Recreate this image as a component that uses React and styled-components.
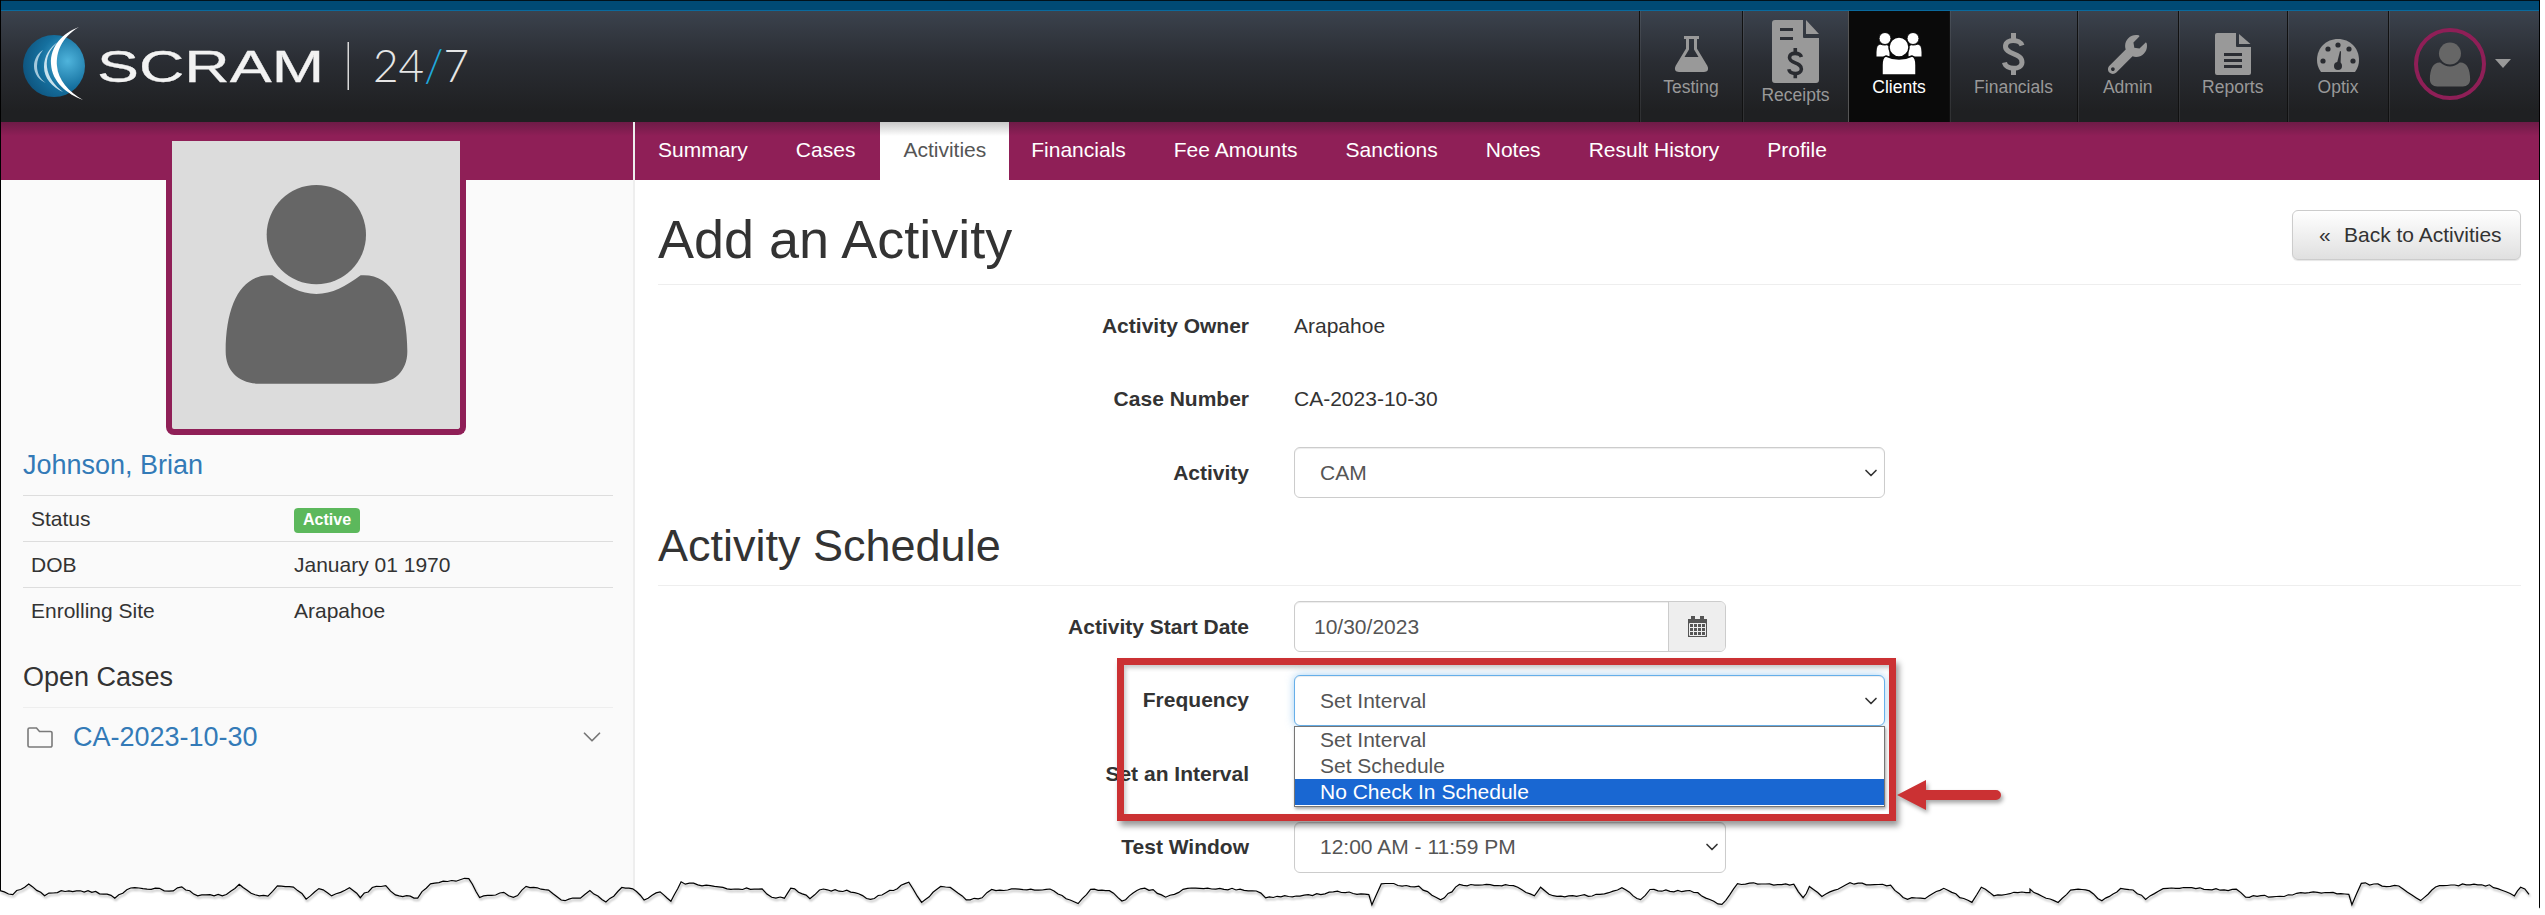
import React from "react";
import styled, { createGlobalStyle } from "styled-components";
import { ChevronDown } from "lucide-react";
import { FaWrench } from "react-icons/fa";

const GlobalStyle = createGlobalStyle`
  html, body {
    margin: 0;
    background: #fff;
    overflow: hidden;
  }
  * {
    box-sizing: border-box;
  }
  body {
    font-family: "Liberation Sans", Arial, sans-serif;
    font-size: 21px;
    color: #333;
  }
`;

const Page = styled.div`
  position: relative;
  width: 2545px;
  height: 915px;
  overflow: hidden;
`;

const Frame = styled.div`
  width: 2540px;
  height: 915px;
  border-left: 1px solid #000;
  border-right: 1px solid #000;
  display: flex;
  flex-direction: column;
`;

const TopStrip = styled.div`
  height: 11px;
  flex: none;
  background: #004a75;
  border-top: 1px solid #02121c;
  border-bottom: 1px solid #0a6a9e;
`;

const Header = styled.header`
  height: 111px;
  flex: none;
  display: flex;
  justify-content: space-between;
  background: linear-gradient(#3b424d, #2a2d33 45%, #1f2022 90%);
`;

const Logo = styled.svg`
  width: 480px;
  height: 111px;
  flex: none;
`;

const NavIcons = styled.nav`
  display: flex;
`;

const NavItem = styled.div`
  width: ${(p) => p.$w}px;
  display: flex;
  flex-direction: column;
  align-items: center;
  border-left: 1px solid ${(p) => (p.$active ? "#555" : "#111")};
  box-shadow: ${(p) => (p.$active ? "1px 0 0 #555" : "inset 1px 0 0 rgba(255, 255, 255, 0.08)")};
  background: ${(p) => (p.$active ? "#0a0a0a" : "transparent")};
  color: ${(p) => (p.$active ? "#fff" : "#999")};
  position: relative;
`;

const IconSlot = styled.div`
  height: ${(p) => p.$h}px;
  display: flex;
  align-items: flex-end;
  justify-content: center;
  padding-bottom: ${(p) => p.$lift}px;
`;

const NavLabel = styled.span`
  font-size: 17.5px;
  line-height: 20px;
`;

const UserMenu = styled.div`
  width: 151px;
  display: flex;
  align-items: center;
  padding: 0 0 6px 25px;
  border-left: 1px solid #111;
  box-shadow: inset 1px 0 0 rgba(255, 255, 255, 0.08);
`;

const Caret = styled.span`
  width: 0;
  height: 0;
  margin-left: 9px;
  border-left: 8px solid transparent;
  border-right: 8px solid transparent;
  border-top: 9px solid #999;
`;

const Body = styled.div`
  flex: 1;
  display: flex;
  min-height: 0;
`;

const Sidebar = styled.aside`
  width: 634px;
  flex: none;
  background: #fafafa;
  border-right: 2px solid #eee;
`;

const Band = styled.div`
  height: 58px;
  background: linear-gradient(#6e1b47, #8f1f57 14px);
`;

const SideContent = styled.div`
  padding: 0 20px 0 22px;
`;

const PhotoCard = styled.div`
  position: relative;
  width: 300px;
  height: 294px;
  margin: -39px 0 0 143px;
  padding-top: 42px;
  display: flex;
  justify-content: center;
  align-items: flex-start;
  background: #dcdcdc;
  border: 6px solid #8f1f57;
  border-top: 0;
  border-radius: 0 0 8px 8px;
`;

const ClientName = styled.a`
  display: block;
  margin-top: 15px;
  font-size: 27px;
  line-height: 30px;
  color: #337ab7;
`;

const InfoTable = styled.div`
  margin-top: 15px;
`;

const InfoRow = styled.div`
  height: 46px;
  display: grid;
  grid-template-columns: 263px 1fr;
  align-items: center;
  padding-left: 8px;
  border-top: 1px solid #ddd;
`;

const Badge = styled.span`
  justify-self: start;
  height: 25px;
  margin-top: 3px;
  line-height: 24px;
  padding: 0 9px;
  border-radius: 4px;
  background: #5cb85c;
  color: #fff;
  font-size: 16px;
  font-weight: 700;
`;

const SideTitle = styled.h4`
  margin: 28px 0 0;
  padding-bottom: 14px;
  font-size: 27px;
  line-height: 32px;
  font-weight: 400;
  border-bottom: 1px solid #eee;
`;

const CaseRow = styled.div`
  height: 58px;
  display: flex;
  align-items: center;
  padding: 0 6px 0 4px;
  color: #337ab7;
  font-size: 27px;
`;

const CaseLink = styled.a`
  flex: 1;
  margin-left: 20px;
`;

const Main = styled.main`
  flex: 1;
  min-width: 0;
`;

const Tabs = styled.div`
  height: 58px;
  display: flex;
  gap: 2px;
  background: linear-gradient(#6e1b47, #8f1f57 14px);
`;

const Tab = styled.a`
  padding: 0 23px;
  margin-right: ${(p) => (p.$active ? "-3px" : "0")};
  line-height: 56px;
  color: ${(p) => (p.$active ? "#555" : "#fff")};
  background: ${(p) => (p.$active ? "linear-gradient(#c8c8c8, #fff 14px)" : "transparent")};
`;

const Content = styled.div`
  padding: 0 18px 0 23px;
`;

const PageHeader = styled.div`
  height: 105px;
  padding-top: 29px;
  display: flex;
  justify-content: space-between;
  align-items: flex-start;
  border-bottom: 1px solid #eee;
`;

const Title = styled.h1`
  margin: 0;
  font-size: 54px;
  line-height: 60px;
  font-weight: 400;
`;

const BackButton = styled.button`
  width: 229px;
  height: 50px;
  margin-top: 1px;
  padding: 0 0 0 26px;
  display: flex;
  align-items: center;
  font: inherit;
  color: #333;
  background: linear-gradient(#fff, #e0e0e0);
  border: 1px solid #ccc;
  border-radius: 6px;
  box-shadow: 0 1px 1px rgba(0, 0, 0, 0.1);
`;

const BackMark = styled.span`
  width: 25px;
  text-align: left;
`;

const FormGroup = styled.div`
  display: flex;
  flex-direction: column;
  gap: ${(p) => p.$gap}px;
  padding-top: ${(p) => p.$top}px;
`;

const FormRow = styled.div`
  height: ${(p) => p.$h}px;
  display: grid;
  grid-template-columns: 591px 1fr;
  column-gap: 45px;
  align-items: center;
`;

const Label = styled.label`
  font-weight: 700;
  text-align: right;
`;

const SectionTitle = styled.h2`
  margin: 23px 0 0;
  padding-bottom: 14px;
  font-size: 45px;
  line-height: 50px;
  font-weight: 400;
  border-bottom: 1px solid #eee;
`;

const Field = styled.div`
  position: relative;
  width: ${(p) => p.$w}px;
  height: 51px;
`;

const SelectBox = styled.div`
  height: 100%;
  display: flex;
  align-items: center;
  justify-content: space-between;
  padding: ${(p) => (p.$focus ? "2px" : "0")} 3px 0 25px;
  color: #555;
  border: 1px solid ${(p) => (p.$focus ? "#66afe9" : "#ccc")};
  border-radius: 6px;
  box-shadow: ${(p) =>
    p.$focus
      ? "inset 0 1px 1px rgba(0,0,0,.075), 0 0 8px rgba(102,175,233,.6)"
      : "inset 0 1px 1px rgba(0,0,0,.075)"};
  background: #fff;
`;

const DateGroup = styled.div`
  height: 100%;
  display: flex;
  border: 1px solid #ccc;
  border-radius: 6px;
  overflow: hidden;
  color: #555;
  box-shadow: inset 0 1px 1px rgba(0, 0, 0, 0.075);
`;

const DateInput = styled.div`
  flex: 1;
  padding-left: 19px;
  line-height: 49px;
`;

const DateAddon = styled.div`
  width: 57px;
  display: flex;
  align-items: center;
  justify-content: center;
  background: #eee;
  border-left: 1px solid #ccc;
`;

const Dropdown = styled.div`
  position: absolute;
  z-index: 2;
  top: 51px;
  left: 0;
  width: 100%;
  height: 81px;
  background: #fff;
  border: 1px solid #767676;
  box-shadow: 1px 2px 3px rgba(0, 0, 0, 0.35);
`;

const Option = styled.div`
  height: 26px;
  line-height: 25px;
  padding-left: 25px;
  color: ${(p) => (p.$selected ? "#fff" : "#555")};
  background: ${(p) => (p.$selected ? "#1967d2" : "transparent")};
`;

const RedBox = styled.div`
  position: absolute;
  z-index: 3;
  left: 1117px;
  top: 658px;
  width: 779px;
  height: 163px;
  border: 7px solid #cb3133;
  box-shadow: 3px 5px 6px rgba(0, 0, 0, 0.4), inset 2px 3px 4px rgba(0, 0, 0, 0.22);
`;

const Arrow = styled.svg`
  position: absolute;
  z-index: 3;
  left: 1896px;
  top: 778px;
  filter: drop-shadow(2px 3px 2px rgba(0, 0, 0, 0.35));
`;

const TornEdge = styled.svg`
  position: absolute;
  z-index: 4;
  left: 0;
  top: 870px;
  display: block;
`;

const leftTear = [
  [0, 155], [20, 162], [45, 132], [70, 165], [90, 155], [150, 155], [180, 172], [205, 142], [250, 147],
  [265, 155], [285, 142], [310, 168], [355, 165], [375, 136], [400, 165], [420, 168], [435, 140], [460, 140],
  [480, 175], [500, 143], [520, 170], [548, 142], [565, 170], [590, 136], [605, 140], [620, 168], [655, 172],
  [675, 130], [715, 122], [735, 115], [752, 172], [790, 160], [805, 175], [825, 142], [860, 150], [880, 180],
  [910, 175], [925, 150], [950, 187], [975, 145], [992, 145], [1010, 180], [1035, 155], [1052, 185], [1068, 128],
  [1140, 145], [1195, 148], [1210, 175], [1230, 172], [1240, 142], [1270, 175], [1285, 148], [1340, 155],
  [1365, 180], [1425, 128], [1445, 188], [1475, 140], [1490, 140], [1515, 178], [1540, 172], [1555, 148], [1568, 150],
].map(([x, y]) => [x / 1.568, 840 + y / 3]);

const midTear = [
  [0, 900], [45, 940], [65, 900], [95, 900], [115, 935], [145, 895], [165, 900], [185, 925], [220, 892], [330, 900],
  [345, 920], [400, 918], [460, 905], [510, 915], [515, 945], [530, 880], [590, 890], [625, 930], [655, 885],
  [735, 885], [775, 915], [785, 890], [805, 920], [880, 915], [915, 895], [945, 930], [960, 900], [1030, 905],
  [1075, 945], [1100, 880], [1190, 885], [1205, 925], [1215, 890], [1235, 920], [1280, 880], [1345, 885],
  [1365, 925], [1400, 925], [1430, 895], [1475, 940], [1490, 890], [1510, 915], [1568, 905],
].map(([x, y]) => [1050 + x / 1.6, 590 + y / 3]);

// the right end is not traced, it repeats the middle piece
const rightTear = midTear.map(([x, y]) => [x + 980, y]).filter(([x]) => x < 2560);

const buildTear = () => {
  const points = [...leftTear, ...midTear, ...rightTear];
  let seed = 17;
  const jitter = () => {
    seed = (seed * 16807) % 2147483647;
    return (seed / 2147483647 - 0.5) * 2;
  };
  const out = [];
  for (let i = 0; i < points.length - 1; i++) {
    const [x1, y1] = points[i];
    const [x2, y2] = points[i + 1];
    const steps = Math.max(1, Math.round((x2 - x1) / 4));
    for (let s = 0; s < steps; s++) {
      const t = s / steps;
      out.push([x1 + (x2 - x1) * t, y1 + (y2 - y1) * t + jitter() * 1.1]);
    }
  }
  return out.map(([x, y]) => `${x.toFixed(1)} ${y.toFixed(1)}`).join(" L");
};

const tear = buildTear();

const PersonShape = ({ width, height, color = "#666" }) => (
  <svg width={width} height={height} viewBox="190 160 555 606" style={{ position: "relative" }}>
    <circle cx="467" cy="315" r="149" fill={color} />
    <path
      fill={color}
      d="M335 437C380 470 420 493 467 493C515 493 555 470 600 437C690 430 740 520 740 665C740 725 700 762 640 762L295 762C235 762 195 725 195 665C195 520 245 430 335 437Z"
    />
  </svg>
);

const FlaskIcon = () => (
  <svg width="35" height="36" viewBox="0 0 35 36">
    <path d="M10 1.5H25M13.5 2V13L3 30.5Q1 34.5 5 34.5H30Q34 34.5 32 30.5L21.5 13V2" fill="none" stroke="currentColor" strokeWidth="3" />
    <path d="M9 21H26L33 34H2Z" fill="currentColor" />
  </svg>
);

const DollarStroke = ({ x = 0, y = 0, s = 1, color }) => (
  <g transform={`translate(${x} ${y}) scale(${s})`} fill="none" stroke={color} strokeWidth="5">
    <path d="M20 12.5C18 6 4 5.5 3.5 13C3 22 20.5 19.5 20 29.5C19.5 37.5 4 37 2.5 29.5" />
    <path d="M11.5 0V8M11.5 34V42" />
  </g>
);

const ReceiptIcon = () => (
  <svg width="47" height="63" viewBox="0 0 47 63">
    <path fill="currentColor" d="M3 0H31V17a1 1 0 0 0 1 1H47V60a3 3 0 0 1-3 3H3a3 3 0 0 1-3-3V3a3 3 0 0 1 3-3Z" />
    <path fill="currentColor" d="M34 0L47 14H34Z" />
    <path fill="#2d3036" d="M8 8H21V11H8ZM8 17H21V20H8Z" />
    <DollarStroke x={15} y={28} s={0.72} color="#2a2c31" />
  </svg>
);

const ClientsIcon = () => (
  <svg width="46" height="43" viewBox="0 0 46 43">
    <g fill="currentColor" stroke="#0a0a0a" strokeWidth="1">
      <circle cx="9" cy="6.5" r="6" />
      <circle cx="37" cy="6.5" r="6" />
      <path d="M4 12Q0 13 0 20V25H14V14Q10 12 9 13Q6 13 4 12Z" />
      <path d="M42 12Q46 13 46 20V25H32V14Q36 12 37 13Q40 13 42 12Z" />
      <path d="M10 24Q6 25 6 33V43H40V33Q40 25 36 24Q30 27 23 27Q16 27 10 24Z" strokeWidth="1.5" />
      <circle cx="23" cy="15" r="10" strokeWidth="1.5" />
    </g>
  </svg>
);

const DollarIcon = () => (
  <svg width="24" height="42" viewBox="0 0 24 42">
    <DollarStroke color="currentColor" />
  </svg>
);

const ReportIcon = () => (
  <svg width="36" height="42" viewBox="0 0 36 42">
    <path fill="currentColor" d="M2 0H21V13a1 1 0 0 0 1 1H36V40a2 2 0 0 1-2 2H2a2 2 0 0 1-2-2V2a2 2 0 0 1 2-2Z" />
    <path fill="currentColor" d="M24 1L35.5 11H24Z" />
    <path fill="#2b2d33" d="M9 20H27V23H9ZM9 26H27V29H9ZM9 32H27V35H9Z" />
  </svg>
);

const GaugeIcon = () => (
  <svg width="42" height="33" viewBox="0 0 42 33">
    <path fill="currentColor" d="M4 33C1 29 0 25 0 21C0 9 9 0 21 0C33 0 42 9 42 21C42 25 41 29 38 33Z" />
    <g fill="#2a2c31">
      <circle cx="11" cy="10" r="2.6" />
      <circle cx="21" cy="6" r="2.6" />
      <circle cx="32" cy="10" r="2.6" />
      <circle cx="6" cy="22" r="2.6" />
      <circle cx="36" cy="22" r="2.6" />
      <circle cx="21" cy="27" r="4" />
      <path d="M19.5 26L23 12L24 12.5L23.5 26Z" />
    </g>
  </svg>
);

const CalendarIcon = () => (
  <svg width="19" height="21" viewBox="0 0 19 21">
    <path fill="#555" d="M0 3H19V21H0Z" />
    <path fill="#555" d="M3 0H7V4H3ZM12 0H16V4H12Z" />
    <path
      fill="none"
      stroke="#eee"
      strokeWidth="1"
      d="M1.5 7.5H17.5V19.5H1.5ZM1.5 11.5H17.5M1.5 15.5H17.5M5.5 7.5V19.5M9.5 7.5V19.5M13.5 7.5V19.5"
    />
  </svg>
);

const FolderIcon = () => (
  <svg width="26" height="21" viewBox="0 0 26 21" style={{ flex: "none" }}>
    <path
      d="M1 18.5V2.5A1.5 1.5 0 0 1 2.5 1H9.5L12.5 4.5H23.5A1.5 1.5 0 0 1 25 6V18.5A1.5 1.5 0 0 1 23.5 20H2.5A1.5 1.5 0 0 1 1 18.5Z"
      fill="none"
      stroke="#7a7a7a"
      strokeWidth="1.6"
    />
  </svg>
);

const navItems = [
  { label: "Testing", w: 103, slot: 66, lift: 5, icon: <FlaskIcon /> },
  { label: "Receipts", w: 106, slot: 74, lift: 2, icon: <ReceiptIcon /> },
  { label: "Clients", w: 101, slot: 66, lift: 2, active: true, icon: <ClientsIcon /> },
  { label: "Financials", w: 128, slot: 66, lift: 2, icon: <DollarIcon /> },
  { label: "Admin", w: 100.5, slot: 66, lift: 3, icon: <FaWrench size={39} /> },
  { label: "Reports", w: 109.5, slot: 66, lift: 2, icon: <ReportIcon /> },
  { label: "Optix", w: 101, slot: 66, lift: 5, icon: <GaugeIcon /> },
];

const tabs = ["Summary", "Cases", "Activities", "Financials", "Fee Amounts", "Sanctions", "Notes", "Result History", "Profile"];

const selectChevron = <ChevronDown size={20} strokeWidth={2} color="#333" />;

const App = () => {
  return (
    <Page>
      <GlobalStyle />
      <Frame>
        <TopStrip />
        <Header>
          <Logo viewBox="0 11 480 111">
            <defs>
              <radialGradient id="globe" cx="0.72" cy="0.42" r="0.8">
                <stop offset="0" stopColor="#4fb4dc" />
                <stop offset="0.55" stopColor="#15709f" />
                <stop offset="1" stopColor="#0d4f78" />
              </radialGradient>
            </defs>
            <ellipse cx="53" cy="66" rx="31" ry="31" fill="url(#globe)" />
            <path fill="#fff" d="M78 27C60 38 55 52 56 66C57 80 68 92 82 100C66 94 51 82 50 64C49 46 62 33 78 27Z" />
            <path fill="#e8f4fa" opacity="0.85" d="M57 42C48 50 45 58 46 67C47 77 54 86 62 92C51 87 43 78 43 67C43 56 49 47 57 42Z" />
            <path fill="#d5eaf4" opacity="0.75" d="M42 50C38 55 36 60 36 66C36 73 39 79 45 83C38 80 33 74 33 66C33 59 37 53 42 50Z" />
            <text x="96" y="82" fontFamily="Liberation Sans" fontSize="44" fill="#f2f2f2" stroke="#f2f2f2" strokeWidth="0.3" textLength="227" lengthAdjust="spacingAndGlyphs">
              SCRAM
            </text>
            <rect x="346.5" y="42" width="1.5" height="48" fill="#d8d8d8" />
            <text x="372" y="82" fontFamily="Lato" fontWeight="300" fontSize="45" fill="#e6e6e6" textLength="96" lengthAdjust="spacingAndGlyphs">
              24<tspan fill="#1fa8dc">/</tspan>7
            </text>
          </Logo>
          <NavIcons>
            {navItems.map((item) => (
              <NavItem key={item.label} $w={item.w} $active={item.active}>
                <IconSlot $h={item.slot} $lift={item.lift}>
                  {item.icon}
                </IconSlot>
                <NavLabel>{item.label}</NavLabel>
              </NavItem>
            ))}
            <UserMenu>
              <svg width="72" height="72" viewBox="0 0 72 72">
                <circle cx="36" cy="36" r="34" fill="none" stroke="#8f1f57" strokeWidth="4" />
                <g transform="translate(15.5 14) scale(0.0739)">
                  <circle cx="277" cy="155" r="149" fill="#666" />
                  <path fill="#666" d="M145 277C190 310 230 333 277 333C325 333 365 310 410 277C500 270 550 360 550 505C550 565 510 602 450 602L105 602C45 602 5 565 5 505C5 360 55 270 145 277Z" />
                </g>
              </svg>
              <Caret />
            </UserMenu>
          </NavIcons>
        </Header>
        <Body>
          <Sidebar>
            <Band />
            <SideContent>
              <PhotoCard>
                <PersonShape width={185} height={202} />
              </PhotoCard>
              <ClientName>Johnson, Brian</ClientName>
              <InfoTable>
                <InfoRow>
                  <span>Status</span>
                  <Badge>Active</Badge>
                </InfoRow>
                <InfoRow>
                  <span>DOB</span>
                  <span>January 01 1970</span>
                </InfoRow>
                <InfoRow>
                  <span>Enrolling Site</span>
                  <span>Arapahoe</span>
                </InfoRow>
              </InfoTable>
              <SideTitle>Open Cases</SideTitle>
              <CaseRow>
                <FolderIcon />
                <CaseLink>CA-2023-10-30</CaseLink>
                <ChevronDown size={30} strokeWidth={1.4} color="#777" />
              </CaseRow>
            </SideContent>
          </Sidebar>
          <Main>
            <Tabs>
              {tabs.map((t) => (
                <Tab key={t} $active={t === "Activities"}>
                  {t}
                </Tab>
              ))}
            </Tabs>
            <Content>
              <PageHeader>
                <Title>Add an Activity</Title>
                <BackButton>
                  <BackMark>«</BackMark>
                  Back to Activities
                </BackButton>
              </PageHeader>
              <FormGroup $gap={24.5} $top={17}>
                <FormRow $h={48}>
                  <Label>Activity Owner</Label>
                  <span>Arapahoe</span>
                </FormRow>
                <FormRow $h={48}>
                  <Label>Case Number</Label>
                  <span>CA-2023-10-30</span>
                </FormRow>
                <FormRow $h={51}>
                  <Label>Activity</Label>
                  <Field $w={591}>
                    <SelectBox>
                      CAM
                      {selectChevron}
                    </SelectBox>
                  </Field>
                </FormRow>
              </FormGroup>
              <SectionTitle>Activity Schedule</SectionTitle>
              <FormGroup $gap={22.6} $top={15}>
                <FormRow $h={51}>
                  <Label>Activity Start Date</Label>
                  <Field $w={432}>
                    <DateGroup>
                      <DateInput>10/30/2023</DateInput>
                      <DateAddon>
                        <CalendarIcon />
                      </DateAddon>
                    </DateGroup>
                  </Field>
                </FormRow>
                <FormRow $h={51}>
                  <Label>Frequency</Label>
                  <Field $w={591}>
                    <SelectBox $focus>
                      Set Interval
                      {selectChevron}
                    </SelectBox>
                    <Dropdown>
                      <Option>Set Interval</Option>
                      <Option>Set Schedule</Option>
                      <Option $selected>No Check In Schedule</Option>
                    </Dropdown>
                  </Field>
                </FormRow>
                <FormRow $h={51}>
                  <Label>Set an Interval</Label>
                </FormRow>
                <FormRow $h={51}>
                  <Label>Test Window</Label>
                  <Field $w={432}>
                    <SelectBox>
                      12:00 AM - 11:59 PM
                      {selectChevron}
                    </SelectBox>
                  </Field>
                </FormRow>
              </FormGroup>
            </Content>
          </Main>
        </Body>
      </Frame>
      <RedBox />
      <Arrow width="106" height="34" viewBox="0 0 106 34">
        <path fill="#cb3133" d="M1 17L30 2V12H100a5 5 0 0 1 0 10H30V32Z" />
      </Arrow>
      <TornEdge width="2545" height="45" viewBox="0 870 2545 45">
        <path d={`M${tear} L2545 915 L0 915Z`} fill="#fff" />
        <path d={`M${tear}`} fill="none" stroke="#000" strokeWidth="1.2" style={{ filter: "drop-shadow(1px 2px 1px rgba(0,0,0,0.35))" }} />
      </TornEdge>
    </Page>
  );
};

export default App;
